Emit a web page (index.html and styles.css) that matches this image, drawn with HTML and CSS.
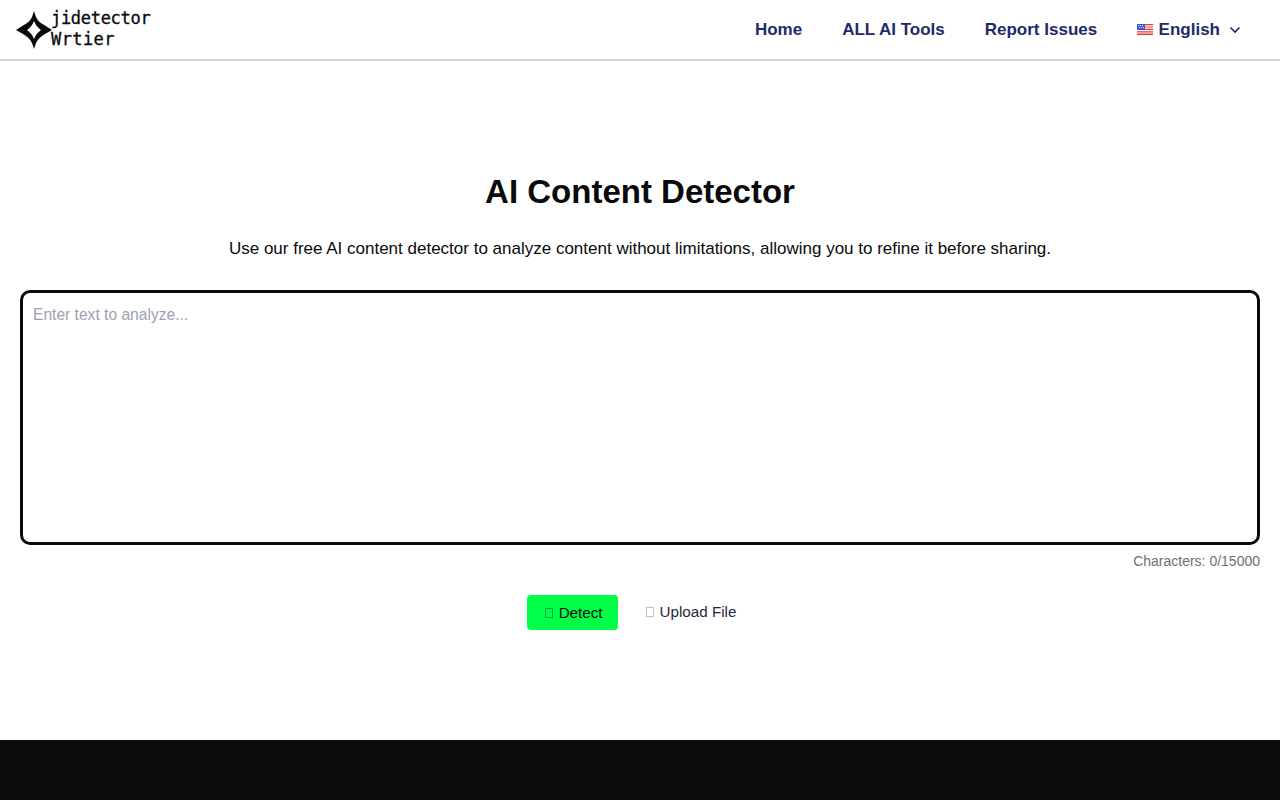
FILE: index.html
```html
<!DOCTYPE html>
<html lang="en">
<head>
<meta charset="utf-8">
<title>AI Content Detector</title>
<link rel="stylesheet" href="styles.css">
</head>
<body>
<header class="site-header">
  <a class="logo" href="#">
    <svg class="logo-mark" width="38" height="38" viewBox="0 0 38 38" aria-hidden="true">
      <path fill-rule="evenodd" d="M19 0 L21 6 Q23.5 11.5 30 14.5 L37 19 L30 23 Q23.5 26.5 21 32 L19 38 L17 32 Q14.5 26.5 8 23 L1 19 L8 14.5 Q14.5 11.5 17 6 Z M19 10 Q21 15.5 26 19 Q21 22.5 19 28 Q17 22.5 12 19 Q17 15.5 19 10 Z" fill="#0a0a0a"/>
    </svg>
    <span class="logo-text"><span>jidetector</span><span class="logo-line2">Wrtier</span></span>
  </a>
  <nav class="nav">
    <a href="#">Home</a>
    <a href="#">ALL AI Tools</a>
    <a href="#">Report Issues</a>
    <a href="#" class="lang">
      <svg class="flag" width="16" height="11" viewBox="0 0 16 11" aria-hidden="true">
        <rect width="16" height="11" fill="#fff"/>
        <path d="M0 0h16v1.2H0zM0 2.4h16v1.2H0zM0 4.8h16v1.2H0zM0 7.2h16v1.2H0zM0 9.6h16v1.4H0z" fill="#e23b32"/>
        <rect width="8" height="6" fill="#3d55d0"/>
        <path d="M1 1h1v1H1zM3 1h1v1H3zM5 1h1v1H5zM2 3h1v1H2zM4 3h1v1H4zM6 3h1v1H6z" fill="#e6eaff"/>
      </svg>
      <span>English</span>
      <svg class="chev" width="12" height="8" viewBox="0 0 12 8" aria-hidden="true"><path d="M1.5 1.5 L6 6 L10.5 1.5" fill="none" stroke="#1e2a69" stroke-width="1.6"/></svg>
    </a>
  </nav>
</header>
<main class="main">
  <h1 class="title">AI Content Detector</h1>
  <p class="lead">Use our free AI content detector to analyze content without limitations, allowing you to refine it before sharing.</p>
  <textarea class="input" placeholder="Enter text to analyze..."></textarea>
  <div class="count">Characters: 0/15000</div>
  <div class="actions">
    <button class="btn-detect"><span class="tofu tofu-dark"></span>Detect</button>
    <button class="btn-upload"><span class="tofu tofu-light"></span>Upload File</button>
  </div>
</main>
<footer class="footer"></footer>
</body>
</html>
```
FILE: styles.css
```css
* { box-sizing: border-box; }
html, body { margin: 0; padding: 0; }
body {
  font-family: "Liberation Sans", Arial, sans-serif;
  background: #fff;
  color: #0a0a0a;
  height: 800px;
  overflow: hidden;
  display: flex;
  flex-direction: column;
}
.site-header {
  height: 61px;
  flex: none;
  display: flex;
  align-items: center;
  justify-content: space-between;
  padding: 0 39px 2px 15px;
  border-bottom: 2px solid #d1d5db;
}
.logo { display: flex; align-items: center; text-decoration: none; color: #0a0a0a; }
.logo-mark { display: block; margin-top: 2px; margin-right: -2px; }
.logo-text {
  display: flex;
  flex-direction: column;
  font-family: "DejaVu Sans Mono", monospace;
  font-size: 17px;
  line-height: 21px;
  letter-spacing: -0.3px;
  -webkit-text-stroke: 0.3px #0a0a0a;
}
.logo-line2 { letter-spacing: 0.4px; }
.nav { display: flex; align-items: center; gap: 40px; margin-top: 2px; }
.nav a {
  color: #1e2a69;
  font-weight: 700;
  font-size: 17px;
  text-decoration: none;
}
.nav .lang { display: flex; align-items: center; margin-left: -0.6px; }
.flag { margin-right: 6px; }
.chev { margin-left: 9px; }
.main { flex: 1; padding: 0 20px; display: flex; flex-direction: column; }
.title {
  margin: 111px 0 0;
  text-align: center;
  font-size: 33px;
  line-height: 40px;
  font-weight: 700;
}
.lead {
  margin: 27px 0 0;
  text-align: center;
  font-size: 17px;
  line-height: 20px;
  color: #0a0a0a;
}
.input {
  display: block;
  margin-top: 31px;
  width: 100%;
  height: 255px;
  border: 3px solid #0a0a0a;
  border-radius: 10px;
  padding: 10px;
  font-family: "Liberation Sans", Arial, sans-serif;
  font-size: 15.6px;
  line-height: 24px;
  resize: none;
  outline: none;
}
.input::placeholder { color: #9ca3af; opacity: 1; }
.count {
  margin-top: 8px;
  text-align: right;
  font-size: 14px;
  line-height: 17px;
  color: #6f6f6f;
}
.actions { margin-top: 25px; padding-right: 2px; display: flex; justify-content: center; align-items: center; gap: 13px; }
button { font-family: inherit; font-size: 15.2px; border: 0; cursor: pointer; display: flex; align-items: center; }
.btn-detect {
  height: 35px;
  padding: 0 15px 0 18px;
  background: #00ff48;
  color: #0a0a0a;
  border-radius: 4px;
}
.btn-upload {
  height: 35px;
  padding: 0 15px 2px;
  background: transparent;
  color: #1f2937;
}
.tofu {
  display: inline-block;
  width: 8px;
  height: 10px;
  margin-right: 6px;
  border: 1px solid;
}
.tofu-dark { border-color: #0aa83c; }
.tofu-light { border-color: #bfc2c7; }
.footer { height: 60px; flex: none; background: #0c0c0c; }
```
